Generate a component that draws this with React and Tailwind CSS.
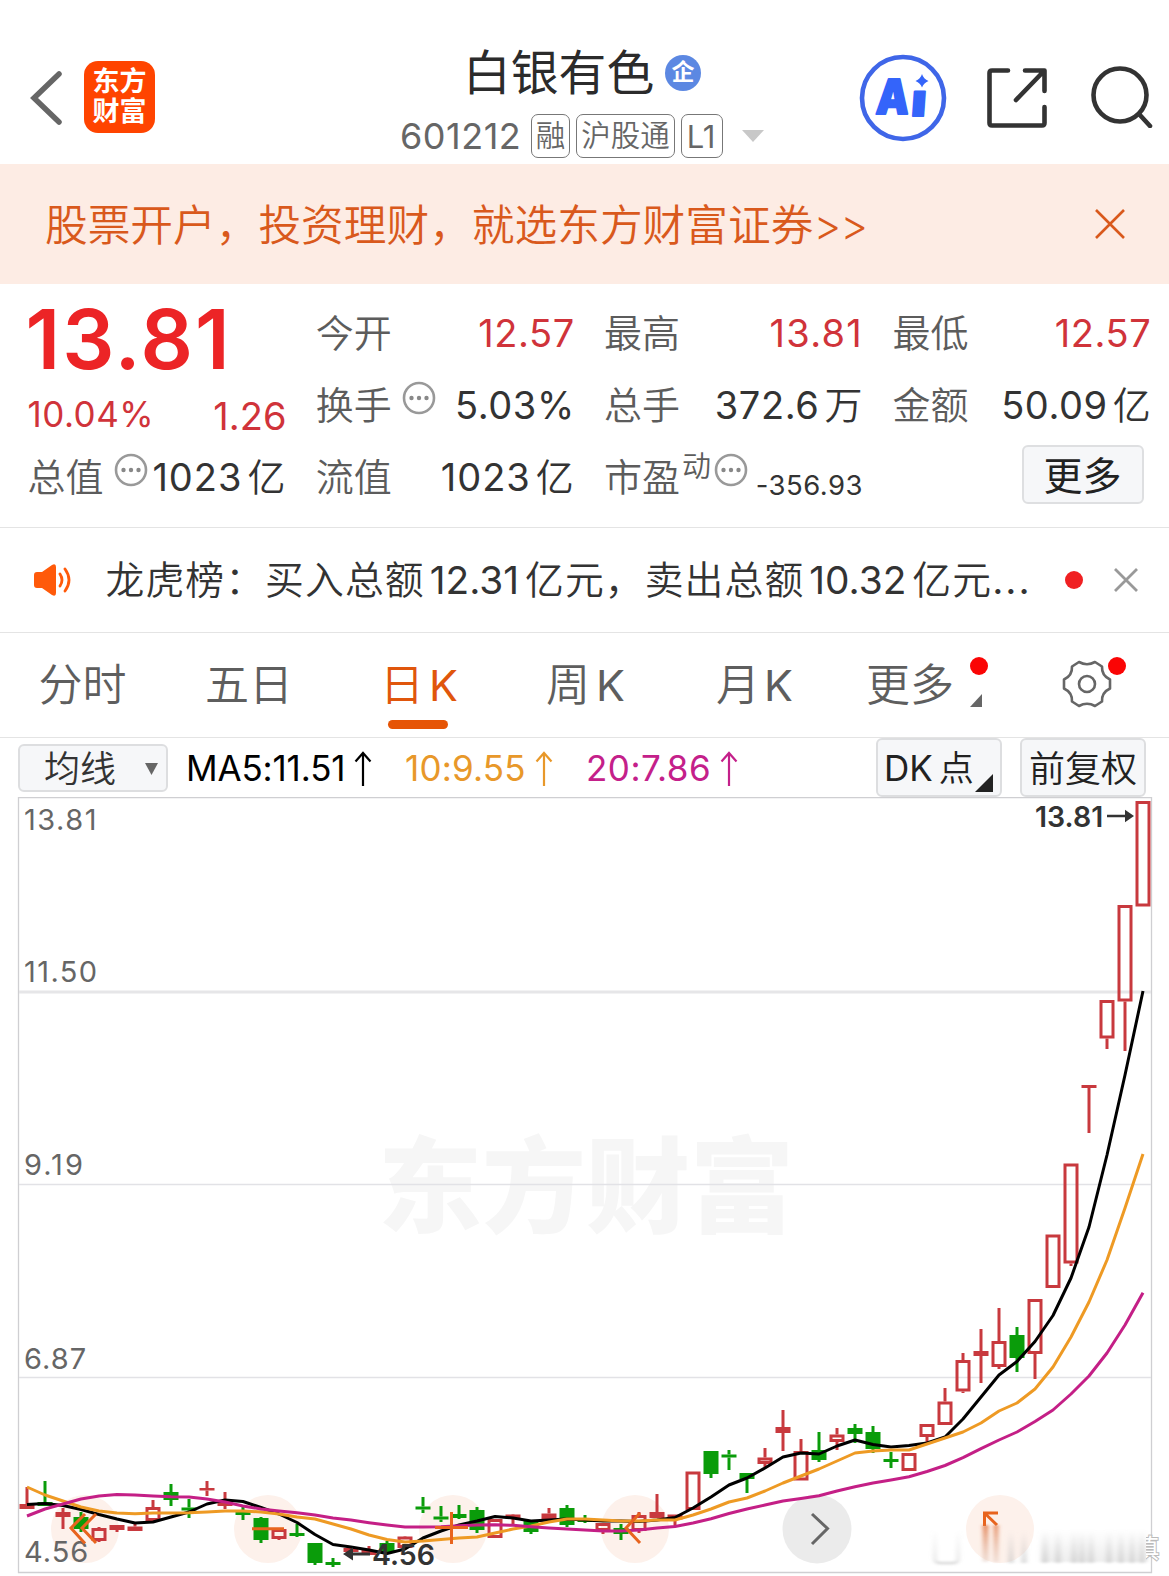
const candles = [
  // kind, high, top, bottom, low
  ["R", 1487, 1504, 1509, 1509],
  ["G", 1481, 1502, 1506, 1506],
  ["R", 1508, 1512, 1517, 1529],
  ["G", 1512, 1517, 1529, 1532],
  ["H", 1527, 1528, 1541, 1542],
  ["R", 1525, 1525, 1530, 1532],
  ["R", 1524, 1526.5, 1531, 1531],
  ["H", 1500, 1507, 1521, 1521],
  ["G", 1484, 1492, 1500, 1506],
  ["G", 1499, 1507.5, 1510.5, 1518],
  ["R", 1481, 1488, 1490.5, 1496],
  ["R", 1492, 1501, 1506, 1509],
  ["G", 1507, 1512, 1515, 1520],
  ["G", 1517, 1518, 1540, 1543],
  ["H", 1528, 1529, 1539, 1540],
  ["G", 1524, 1533, 1536, 1537],
  ["G", 1543, 1543, 1563, 1565],
  ["G", 1558, 1562, 1565, 1567],
  ["R", 1546, 1548, 1552, 1556],
  ["R", 1546, 1550, 1555, 1555],
  ["G", 1541, 1543, 1552, 1552],
  ["H", 1536, 1536.5, 1548, 1548],
  ["G", 1497, 1506.5, 1509.5, 1513],
  ["G", 1506, 1516.5, 1519.5, 1522],
  ["G", 1505, 1514, 1518, 1519],
  ["G", 1507, 1510, 1530, 1533],
  ["H", 1519, 1519, 1538, 1538],
  ["H", 1514, 1514.5, 1519, 1526],
  ["G", 1521, 1521, 1532, 1534],
  ["R", 1508, 1513.5, 1520, 1520],
  ["G", 1505, 1508, 1525, 1527],
  ["G", 1515, 1520, 1522, 1523],
  ["H", 1523, 1523, 1531, 1534],
  ["G", 1524, 1528, 1534, 1540],
  ["H", 1512, 1515, 1531, 1533],
  ["H", 1494, 1512, 1518, 1518],
  ["H", 1514.5, 1514.5, 1519.5, 1527],
  ["H", 1471.5, 1471.5, 1510, 1510],
  ["G", 1451, 1451, 1474, 1478],
  ["G", 1450, 1454.5, 1457.5, 1470],
  ["G", 1473, 1473, 1479, 1493],
  ["H", 1448, 1457.5, 1464, 1468],
  ["R", 1410, 1427, 1433, 1451],
  ["H", 1439, 1451, 1480.5, 1480.5],
  ["G", 1432, 1450, 1460, 1462],
  ["H", 1428, 1434.5, 1442, 1450],
  ["G", 1424, 1428, 1434, 1443],
  ["G", 1426, 1432, 1449, 1453],
  ["G", 1452, 1459, 1462, 1468],
  ["H", 1453, 1453, 1471, 1471],
  ["H", 1424, 1424, 1437, 1442],
  ["H", 1388, 1401.5, 1425, 1425],
  ["H", 1353, 1360, 1391.5, 1393],
  ["R", 1329, 1351, 1356, 1383],
  ["H", 1308, 1341, 1367, 1369],
  ["G", 1327, 1335, 1358, 1372],
  ["H", 1299, 1299, 1354, 1379],
  ["H", 1234.5, 1234.5, 1288, 1288],
  ["H", 1163.5, 1163.5, 1263.5, 1266],
  ["R", 1085, 1085, 1088, 1133],
  ["H", 1000, 1000, 1038.5, 1049],
  ["H", 905, 905, 1001.5, 1051],
  ["H", 801, 801, 906.5, 906.5],
];

const ma5 = [
  1504.5, 1503.5, 1505.5, 1509.5, 1514.5, 1519, 1523, 1522, 1517, 1512, 1504,
  1500, 1501.5, 1507.5, 1514, 1522.5, 1534.5, 1544.5, 1547, 1550, 1553.5, 1549,
  1538, 1531, 1525, 1521, 1516.5, 1518, 1521, 1520, 1519, 1520, 1521, 1521,
  1521.5, 1520, 1517.5, 1508, 1497, 1485, 1478, 1468, 1457, 1453, 1454, 1446,
  1440, 1444.5, 1447, 1445.5, 1443, 1437, 1419, 1397, 1375, 1361.5, 1341.5,
  1315.5, 1278, 1227, 1155, 1075, 991,
];

const ma10 = [
  1487, 1495, 1501, 1507, 1511, 1513, 1513.7, 1513, 1513, 1512.7, 1512, 1511,
  1511, 1512, 1514, 1517, 1519, 1524, 1529, 1535, 1539.5, 1542, 1541, 1539.5,
  1538, 1537, 1533, 1529, 1526, 1522, 1519, 1519, 1520, 1521, 1521, 1520, 1520,
  1515, 1509, 1502, 1498, 1491, 1483, 1476, 1469, 1461, 1453, 1451, 1450, 1450,
  1444, 1438, 1432, 1423, 1411, 1403, 1389, 1367, 1337, 1302, 1260, 1208, 1154,
];

const ma20 = [
  1516, 1509, 1504, 1499, 1496, 1494.5, 1495, 1496, 1496.7, 1497, 1499, 1502,
  1506, 1509, 1511, 1512.7, 1515, 1518, 1520, 1522.7, 1525, 1527, 1527, 1526.7,
  1525.7, 1525, 1524.7, 1525.3, 1526.7, 1528, 1529, 1530, 1531, 1531, 1530,
  1528, 1526.5, 1523, 1518.7, 1513.5, 1509, 1505, 1501, 1498.5, 1495.7, 1491,
  1486.7, 1483, 1480, 1476.7, 1471.5, 1465.5, 1457.7, 1448.7, 1440, 1432,
  1421.5, 1410, 1394, 1376, 1353, 1325, 1292.7,
];

const axisLabels = [
  { text: "13.81", y: 830, spacing: 1.5 },
  { text: "11.50", y: 982, spacing: 1.4 },
  { text: "9.19", y: 1175, spacing: 2 },
  { text: "6.87", y: 1369, spacing: 1 },
  { text: "4.56", y: 1561.5, spacing: 1 },
];

const xAt = (i) => 27 + i * 18;
const toPoints = (values) => values.map((y, i) => `${xAt(i)},${y}`).join(" ");

const Candle = ({ x, kind, high, top, bottom, low }) => {
  const color = kind === "G" ? "#0a9c0a" : "#c8393e";
  return (
    <g stroke={color} strokeWidth="3" fill={color}>
      {high < top && <line x1={x} x2={x} y1={high} y2={top} />}
      {low > bottom && <line x1={x} x2={x} y1={bottom} y2={low} />}
      {kind === "H" ? (
        <rect
          x={x - 6}
          y={top + 1.5}
          width="12"
          height={Math.max(bottom - top - 3, 1)}
          fill="none"
        />
      ) : (
        <rect x={x - 7.5} y={top} width="15" height={bottom - top} stroke="none" />
      )}
    </g>
  );
};

const MoreDots = ({ className }) => (
  <svg viewBox="0 0 34 34" className={`h-[34px] w-[34px] shrink-0 ${className}`}>
    <circle cx="17" cy="17" r="15" fill="none" stroke="#999" strokeWidth="2.6" />
    <circle cx="9.5" cy="17" r="2.2" fill="#888" />
    <circle cx="17" cy="17" r="2.2" fill="#888" />
    <circle cx="24.5" cy="17" r="2.2" fill="#888" />
  </svg>
);

const UpArrow = () => (
  <svg viewBox="0 0 18 36" className="h-9 w-[18px]" fill="none" stroke="currentColor" strokeWidth="2.2">
    <path d="M9 35V2M1.5 10.500 9 2l7.500 8.500" />
  </svg>
);

const Header = () => (
  <header className="flex h-[164px] items-start">
    <svg viewBox="0 0 36 60" className="mt-[68px] ml-[27px] h-[60px] w-9" fill="none" stroke="#666" strokeWidth="5.500">
      <path d="M32 6 7 30l25 24" strokeLinecap="round" />
    </svg>
    <div className="mt-[61px] ml-[21px] flex h-[72px] w-[71px] flex-col items-center justify-center rounded-[14px] bg-[#ff4400] text-[27px] leading-[30px] font-bold text-white">
      <span>东方</span>
      <span>财富</span>
    </div>
    <div className="ml-[245px] flex w-[400px] flex-col">
      <div className="mt-[38px] flex h-[70px] items-center pl-[63px]">
        <h1 className="w-[191px] text-[47.800px] leading-[70px] font-[370] whitespace-nowrap text-[#2b2b2b]">白银有色</h1>
        <span className="ml-[11px] flex h-9 w-9 items-center justify-center rounded-full bg-[#5c88e2] text-[23px] leading-none font-bold text-white">
          <span className="-mt-0.5">企</span>
        </span>
      </div>
      <div className="mt-[6px] flex h-11 items-center text-[#666]">
        <span className="w-[131px] text-[36px] tracking-[0.500px]">601212</span>
        <span className="flex h-[44px] w-[39px] items-center justify-center rounded-[7px] border-[1.500px] border-[#777] text-[29.500px] leading-none font-[350]">融</span>
        <span className="ml-[6px] flex h-[44px] w-[99px] items-center justify-center rounded-[7px] border-[1.500px] border-[#777] text-[29.500px] leading-none font-[350]">沪股通</span>
        <span className="ml-[6px] flex h-[44px] w-[42px] items-center justify-center rounded-[7px] border-[1.500px] border-[#777] pr-0.5 text-[31px] leading-none">L1</span>
        <svg viewBox="0 0 22 12" className="ml-[19px] h-3 w-[22px]" fill="#c8c8c8">
          <path d="M0 0h22L11 12z" />
        </svg>
      </div>
    </div>
    <svg viewBox="0 0 90 90" className="mt-[52.500px] ml-[58px] h-[90px] w-[90px] shrink-0">
      <circle cx="45" cy="45" r="41" fill="none" stroke="#3f66e8" strokeWidth="4.600" />
      <g fill="#3464fa" stroke="#3464fa" strokeWidth="2" strokeLinejoin="round" fontFamily="Inter" fontWeight="900" transform="skewX(-4)">
        <text x="21.500" y="61" fontSize="48" textLength="33" lengthAdjust="spacingAndGlyphs">A</text>
        <text x="57" y="63" fontSize="45" textLength="15" lengthAdjust="spacingAndGlyphs">ı</text>
      </g>
      <path d="M64 21q1.500 5 6.500 7-5 2-6.500 6.500-1.500-4.500-6.500-6.500 5-2 6.500-7z" fill="#3464fa" />
    </svg>
    <svg viewBox="0 0 64 64" className="mt-[66px] ml-[37px] h-16 w-16 shrink-0" fill="none" stroke="#333" strokeWidth="4.600" strokeLinecap="round" strokeLinejoin="round">
      <path d="M23 4.500H7Q4.500 4.500 4.500 7v50q0 2.500 2.500 2.500h50q2.500 0 2.500-2.500V41M40 4.500h19.500V25M59 5 31 34" />
    </svg>
    <svg viewBox="0 0 64 64" className="mt-[64px] ml-[40px] h-16 w-16 shrink-0" fill="none" stroke="#333" strokeWidth="4.600" strokeLinecap="round">
      <circle cx="31" cy="31" r="26.500" />
      <path d="m50 50 11 12" />
    </svg>
  </header>
);

const Banner = () => (
  <div className="flex h-[120px] items-center justify-between bg-[#fdece4] pr-[44px] pl-[45px] text-[#d9591c]">
    <p className="pt-1 text-[42.700px] font-[360]">
      股票开户，投资理财，就选东方财富证券<span className="tracking-[-1px]">&gt;&gt;</span>
    </p>
    <svg viewBox="0 0 30 30" className="h-[30px] w-[30px]" fill="none" stroke="currentColor" strokeWidth="2.600">
      <path d="m1 1 28 28M29 1 1 29" />
    </svg>
  </div>
);

const Stat = ({ label, value, unit, red, dots, spacing = "tracking-[0.600px]" }) => (
  <div className="flex h-[72px] items-center whitespace-nowrap">
    <span className="text-[38px] font-[350] text-[#5c5c5c]">{label}</span>
    {dots && <MoreDots className="mb-[15px] ml-[10px]" />}
    <span className={`ml-auto text-[38px] ${spacing} ${red ? "text-[#d0333a]" : "text-[#333]"}`}>
      {value}
      {unit && <span className="ml-[5px] font-[350]">{unit}</span>}
    </span>
  </div>
);

const Quote = () => (
  <section className="grid h-[244px] grid-cols-[259px_259px_259px_259px] gap-x-[29.300px] border-b border-[#e4e4e4] pt-[13.500px] pl-[27.500px]">
    <div className="flex flex-col">
      <div className="-ml-0.5 flex h-[84px] items-center text-[82px] leading-none font-semibold tracking-[2px] text-[#ec2426]">13.81</div>
      <div className="flex h-[60px] items-center justify-between pt-1.5 text-[#d0333a]">
        <span className="text-[35px] tracking-[0.500px]">10.04%</span>
        <span className="pt-1 text-[38px]">1.26</span>
      </div>
      <Stat label="总值" value="1023" unit="亿" spacing="tracking-[1px]" dots />
    </div>
    <div>
      <Stat label="今开" value="12.57" red />
      <Stat label="换手" value="5.03%" dots />
      <Stat label="流值" value="1023" unit="亿" spacing="tracking-[1px]" />
    </div>
    <div>
      <Stat label="最高" value="13.81" spacing="tracking-[1.300px]" red />
      <Stat label="总手" value="372.6" unit="万" />
      <div className="flex h-[72px] items-center">
        <span className="text-[38px] font-[350] text-[#5c5c5c]">市盈</span>
        <span className="mb-[21px] ml-[2px] text-[29px] font-[350] text-[#5c5c5c]">动</span>
        <MoreDots className="mb-[15px] ml-[3px]" />
        <span className="mt-[16px] ml-auto text-[27.500px] tracking-[0.500px] text-[#333]">-356.93</span>
      </div>
    </div>
    <div>
      <Stat label="最低" value="12.57" red />
      <Stat label="金额" value="50.09" unit="亿" />
      <div className="flex h-[72px] items-center justify-end pr-[7px]">
        <button className="mb-[6px] h-[59px] w-[122px] rounded-[6px] border-2 border-[#dedfe1] bg-[#f6f7f9] pt-0.5 pr-0.5 text-[39px] leading-none font-[370] text-[#222]">
          更多
        </button>
      </div>
    </div>
  </section>
);

const News = () => (
  <section className="flex h-[105px] items-center border-b border-[#e4e4e4] text-[#333]">
    <svg viewBox="0 0 40 32" className="ml-[33px] h-8 w-10" fill="#ff5a0a">
      <path d="M1 11q0-3 3-3h5L19 1q4-2 4 2v26q0 4-4 2L9 24H4q-3 0-3-3z" />
      <path d="M27 10q4 6 0 12M32 5q8 11 0 22" fill="none" stroke="#ff5a0a" strokeWidth="2.800" strokeLinecap="round" />
    </svg>
    <p className="ml-[32.500px] w-[930.500px] text-[38.800px] font-[350] tracking-[1.100px] whitespace-nowrap">
      龙虎榜：买入总额<span className="mr-[6px] ml-[5px] font-normal tracking-normal">12.31</span>亿元，卖出总额
      <span className="mr-[6px] ml-[5px] font-normal tracking-normal">10.32</span>亿元<span className="font-normal tracking-[2px]">...</span>
    </p>
    <span className="ml-[29px] h-[18px] w-[18px] rounded-full bg-[#f02022]" />
    <svg viewBox="0 0 24 24" className="ml-[31px] h-6 w-6" fill="none" stroke="#999" strokeWidth="2.800">
      <path d="m1 1 22 22M23 1 1 23" />
    </svg>
  </section>
);

const Tabs = () => (
  <nav className="flex h-[105px] items-center border-b border-[#e4e4e4] text-[44px] leading-none font-[350] text-[#5e5e5e]">
    <span className="ml-[38.500px] w-[166.500px]">分时</span>
    <span className="w-[175px]">五日</span>
    <span className="relative w-[166px] text-[#e0560c]">
      日<span className="ml-[5px] text-[43px] font-normal">K</span>
      <i className="absolute top-[57px] left-[8px] h-[9px] w-[60px] rounded-full bg-[#e65405]" />
    </span>
    <span className="w-[170px]">周<span className="ml-[6px] text-[43px] font-normal">K</span></span>
    <span className="w-[150px]">月<span className="ml-[4px] text-[43px] font-normal">K</span></span>
    <span className="relative w-[196px]">
      更多
      <i className="absolute -top-[6px] left-[104px] h-[18px] w-[18px] rounded-full bg-[#fa0505]" />
      <svg viewBox="0 0 12 13" className="absolute top-[31px] left-[104px] h-[13px] w-3" fill="#666">
        <path d="M12 0v13H0z" />
      </svg>
    </span>
    <span className="relative">
      <svg viewBox="0 0 50 50" className="-mt-0.5 h-[50px] w-[50px]" fill="none" stroke="#666" strokeWidth="2.600" strokeLinejoin="round">
        <path d="M17 3q8 4.500 16 0l7 4.500q-.5 9 8 13v9q-8.500 4-8 13L33 47q-8-4.500-16 0l-7-4.500q.5-9-8-13v-9q8.500-4 8-13z" />
        <circle cx="25" cy="25" r="8" />
      </svg>
      <i className="absolute -top-[4px] left-[46px] h-[18px] w-[18px] rounded-full bg-[#fa0505]" />
    </span>
  </nav>
);

const Toolbar = () => (
  <div className="flex h-[59px] items-center text-[35px] leading-none">
    <button className="ml-[18px] flex h-12 w-[150px] items-center rounded-[6px] border-2 border-[#dddee0] bg-[#f6f7f9] pt-0.5 pl-[24px] text-[36px] font-[350] text-[#333]">
      均线
      <svg viewBox="0 0 13 12" className="ml-[29px] h-3 w-[13px]" fill="#666">
        <path d="M0 0h13L6.500 12z" />
      </svg>
    </button>
    <span className="ml-[18px] flex w-[219px] items-center pt-0.5 text-black">
      <span className="w-[168px] tracking-[-0.150px]">MA5:11.51</span>
      <UpArrow />
    </span>
    <span className="flex w-[181px] items-center pt-0.5 text-[#e8982a]">
      <span className="w-[130px] tracking-[0.200px]">10:9.55</span>
      <UpArrow />
    </span>
    <span className="flex w-[290px] items-center pt-0.5 text-[#c4208a]">
      <span className="w-[134px] tracking-[0.500px]">20:7.86</span>
      <UpArrow />
    </span>
    <button className="relative h-[59px] w-[126px] rounded-[6px] border-2 border-[#dddee0] bg-[#f6f7f9] pt-0.5 pl-[6px] text-left text-[#222]">
      DK<span className="ml-[6px] font-[350]">点</span>
      <svg viewBox="0 0 18 18" className="absolute right-[7px] bottom-[3px] h-[18px] w-[18px]" fill="#222">
        <path d="M18 0v18H0z" />
      </svg>
    </button>
    <button className="ml-[18px] h-[59px] w-[126px] rounded-[6px] border-2 border-[#dddee0] bg-[#f6f7f9] pt-0.5 text-[36px] font-[350] text-[#222]">
      前复权
    </button>
  </div>
);

const Chart = () => (
  <svg viewBox="0 797 1169 779" className="block h-[779px] w-[1169px]" fontFamily='Inter, "Noto Sans CJK SC", sans-serif'>
    <defs>
      <linearGradient id="smear" x1="0" y1="0" x2="0" y2="1">
        <stop offset="0" stopColor="#bbb" stopOpacity="0" />
        <stop offset="1" stopColor="#bbb" stopOpacity="0.5" />
      </linearGradient>
      <linearGradient id="smearOrange" x1="0" y1="0" x2="0" y2="1">
        <stop offset="0" stopColor="#e0703a" stopOpacity="0.9" />
        <stop offset="1" stopColor="#d8b8a8" stopOpacity="0.4" />
      </linearGradient>
      <filter id="soft" x="-20%" y="-20%" width="140%" height="140%">
        <feGaussianBlur stdDeviation="2 0.8" />
      </filter>
      <clipPath id="edge">
        <rect x="1146" y="1530" width="23" height="40" />
      </clipPath>
    </defs>

    <text x="378" y="1225" fontSize="104" fontWeight="900" fill="#f6f6f6" textLength="416">东方财富</text>

    {[85, 268, 453, 635, 1000].map((cx) => (
      <circle key={cx} cx={cx} cy="1529" r="34" fill="#fdf1eb" />
    ))}
    <circle cx="817" cy="1529" r="34.500" fill="#ebebeb" />

    <g fill="none" stroke="#cfcfd2">
      <path d="M18.500 797.500h1133v775h-1133z" strokeWidth="1.300" />
      <path d="M19 992h1132" stroke="#e6e6e8" strokeWidth="3" />
      <path d="M19 1184.500h1132M19 1377.500h1132" stroke="#e2e2e6" strokeWidth="1.700" />
    </g>

    <g fill="#666" fontSize="29">
      {axisLabels.map(({ text, y, spacing }) => (
        <text key={text} x="24" y={y} letterSpacing={spacing}>{text}</text>
      ))}
    </g>

    {candles.map(([kind, high, top, bottom, low], i) => (
      <Candle key={i} x={xAt(i)} kind={kind} high={high} top={top} bottom={bottom} low={low} />
    ))}

    <g fill="none" strokeWidth="3" strokeLinejoin="round">
      <polyline points={toPoints(ma5)} stroke="#000" />
      <polyline points={toPoints(ma10)} stroke="#ee9a24" />
      <polyline points={toPoints(ma20)} stroke="#c41f86" />
    </g>

    <g fill="#333" fontSize="28.500" fontWeight="560">
      <text x="1035" y="827">13.81</text>
      <text x="372" y="1565">4.56</text>
      <path d="M1107 814.700h18v-5l9 6.300-9 6.300v-5h-18zM370 1552.500h-17v-5l-10 6.500 10 6.500v-5h17z" />
    </g>

    {/* Pan and zoom handles */}
    <g fill="none" stroke="#e8641e" strokeWidth="3">
      <path d="m85 1514-14 14 14 15.500M96 1514l-14 14 14 15" />
      <path d="M252 1528.700h32M435 1527.500h33M451.500 1512v32" />
      <path d="m640 1513-14 15 14 15" />
      <path d="M984.500 1526v-13H998M985 1513.500l12 11.500" />
      <path d="m812 1514 15.500 14.500L812 1544" stroke="#666" />
    </g>

    {/* Faded watermark */}
    <g filter="url(#soft)">
      <rect x="983" y="1525" width="5" height="37" fill="url(#smearOrange)" />
      <rect x="994" y="1525" width="4" height="37" fill="url(#smearOrange)" />
      <rect x="1040" y="1530" width="108" height="32" fill="url(#smear)" opacity="0.500" />
      {[1008, 1021, 1042, 1055, 1071, 1079, 1088, 1106, 1118, 1129, 1139].map((x) => (
        <rect key={x} x={x} y="1531" width="6" height="32" fill="url(#smear)" />
      ))}
      <rect x="936" y="1532" width="20" height="29" fill="#fff" />
      <path d="M935 1530v28q0 5 5 5h13q5 0 5-5v-28" fill="none" stroke="url(#smear)" strokeWidth="3" />
    </g>
    <text x="1133" y="1558" fontSize="26" fill="#fff" stroke="#bbb" strokeWidth="2" paintOrder="stroke" clipPath="url(#edge)">慎</text>
  </svg>
);

export default function App() {
  return (
    <div className="h-[1576px] w-[1169px] overflow-hidden bg-white font-[Inter,'Noto_Sans_CJK_SC',sans-serif]">
      <Header />
      <Banner />
      <Quote />
      <News />
      <Tabs />
      <Toolbar />
      <Chart />
    </div>
  );
}
